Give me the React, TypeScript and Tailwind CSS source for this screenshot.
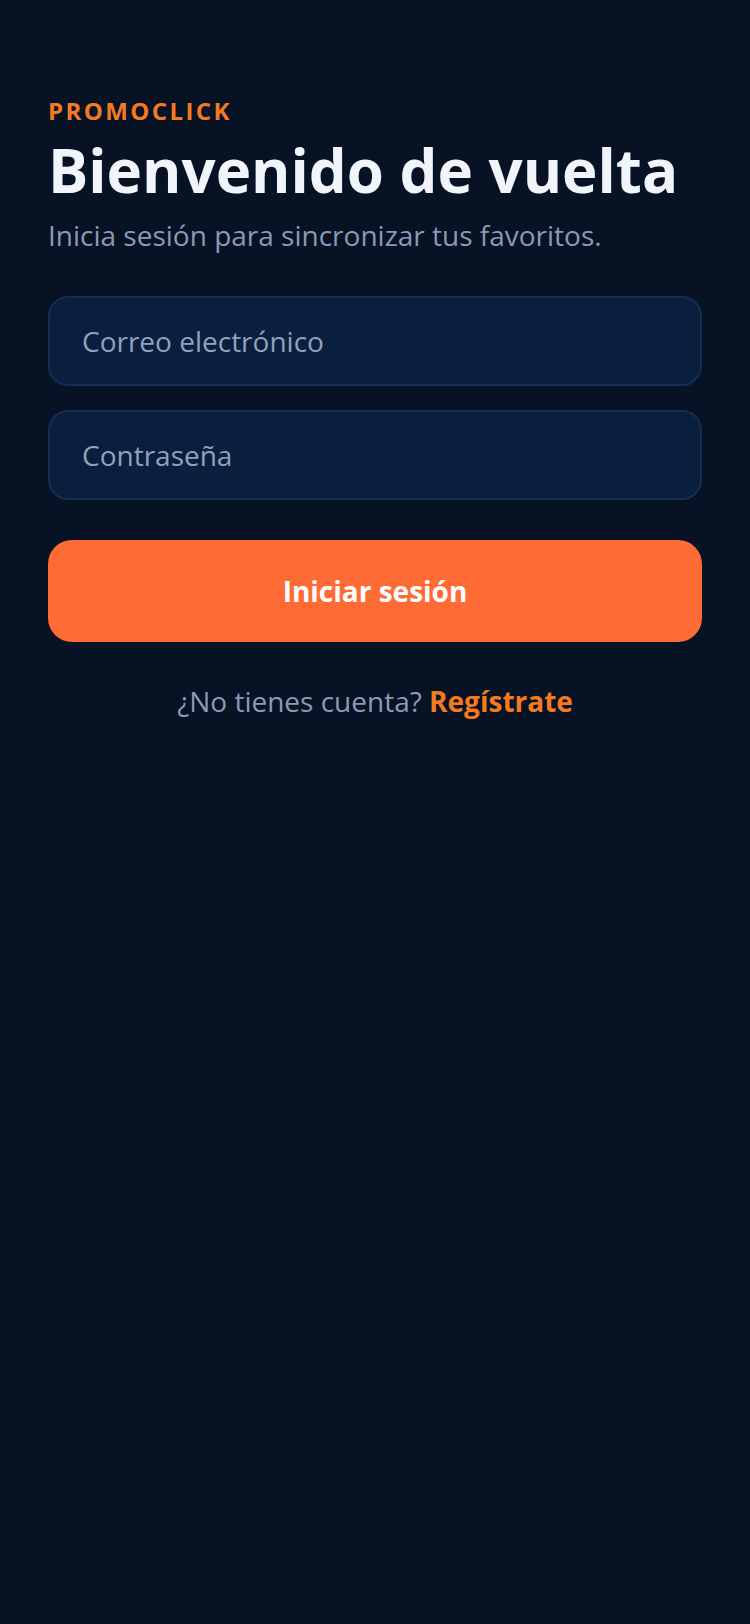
import { useState } from "react";

export default function App() {
  const [email, setEmail] = useState("");
  const [password, setPassword] = useState("");

  return (
    <div
      className="min-h-[1624px] w-full bg-[#071225] px-12 pt-[95px]"
      style={{ fontFamily: '"Open Sans", "Noto Sans", sans-serif' }}
    >
      <p className="text-[24px] leading-[32px] font-bold tracking-[0.1em] text-[#f47a20]">
        PROMOCLICK
      </p>
      <h1 className="mt-[7px] text-[60px] leading-[72px] font-bold text-[#f1f5fb]">
        Bienvenido de vuelta
      </h1>
      <p className="mt-[11px] text-[28px] leading-[36px] text-[#8a9ab3]">
        Inicia sesión para sincronizar tus favoritos.
      </p>

      <form
        className="mt-[43px] flex flex-col"
        onSubmit={(e) => e.preventDefault()}
      >
        <input
          type="email"
          value={email}
          onChange={(e) => setEmail(e.target.value)}
          placeholder="Correo electrónico"
          className="h-[90px] w-full rounded-[20px] border-2 border-[#152d52] bg-[#0a1f3d] px-[32px] text-[28px] text-[#e2e8f0] outline-none placeholder:text-[#8fa2bd]"
        />
        <input
          type="password"
          value={password}
          onChange={(e) => setPassword(e.target.value)}
          placeholder="Contraseña"
          className="mt-6 h-[90px] w-full rounded-[20px] border-2 border-[#152d52] bg-[#0a1f3d] px-[32px] text-[28px] text-[#e2e8f0] outline-none placeholder:text-[#8fa2bd]"
        />
        <button
          type="submit"
          className="mt-10 h-[102px] w-full rounded-[24px] bg-[#ff6b35] text-[28px] font-bold text-white"
        >
          Iniciar sesión
        </button>
      </form>

      <p className="mt-[41px] text-center text-[28px] leading-[36px] text-[#8a9ab3]">
        ¿No tienes cuenta?{" "}
        <a href="#" className="font-bold text-[#f47a20]">
          Regístrate
        </a>
      </p>
    </div>
  );
}
